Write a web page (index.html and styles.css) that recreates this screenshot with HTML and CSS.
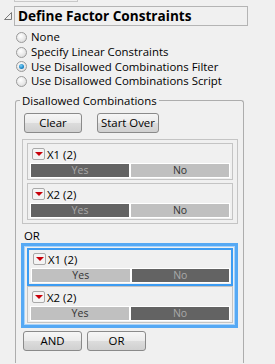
FILE: index.html
```html
<!DOCTYPE html>
<html>
<head>
<meta charset="utf-8">
<link rel="stylesheet" href="styles.css">
</head>
<body>
<div class="stub"></div>
<div class="title-row">
  <svg class="disclose" width="10" height="10" viewBox="0 0 10 10"><path d="M8.5 1.5 L8.5 8.5 L1.5 8.5 Z" fill="none" stroke="#7a7a7a" stroke-width="1"/></svg>
  <div class="title-box">Define Factor Constraints</div>
</div>
<ul class="radios">
  <li><span class="radio"></span>None</li>
  <li><span class="radio"></span>Specify Linear Constraints</li>
  <li><span class="radio on"></span>Use Disallowed Combinations Filter</li>
  <li><span class="radio"></span>Use Disallowed Combinations Script</li>
</ul>
<div class="group">
  <div class="legend">Disallowed Combinations</div>
  <div class="btns">
    <button class="btn w58">Clear</button>
    <button class="btn">Start Over</button>
  </div>
  <div class="panel">
    <div class="fbox">
      <div class="fhead"><span class="tri"></span>X1 (2)</div>
      <div class="bar"><span class="seg dark">Yes</span><span class="seg light">No</span></div>
    </div>
    <div class="fbox">
      <div class="fhead"><span class="tri"></span>X2 (2)</div>
      <div class="bar"><span class="seg dark">Yes</span><span class="seg light">No</span></div>
    </div>
  </div>
  <div class="or-label">OR</div>
  <div class="panel sel">
    <div class="fbox sel">
      <div class="fhead"><span class="tri"></span>X1 (2)</div>
      <div class="bar"><span class="seg light">Yes</span><span class="seg dark">No</span></div>
    </div>
    <div class="fbox">
      <div class="fhead"><span class="tri"></span>X2 (2)</div>
      <div class="bar"><span class="seg light">Yes</span><span class="seg dark">No</span></div>
    </div>
  </div>
  <div class="btns bottom">
    <button class="btn w59">AND</button>
    <button class="btn w59">OR</button>
  </div>
</div>
</body>
</html>
```
FILE: styles.css
```css
html, body {
  margin: 0;
  padding: 0;
  background: #f0f0f0;
  font-family: "Open Sans", "Noto Sans", sans-serif;
  font-size: 11.4px;
  color: #000;
  width: 275px;
  height: 364px;
  overflow: hidden;
}
.stub {
  margin-left: 14px;
  width: 62px;
  height: 1px;
  border: 1px solid #c8c8c8;
  border-top: none;
}
.title-row {
  display: flex;
  align-items: center;
  margin-top: 4px;
  height: 20px;
}
.disclose {
  margin-left: 3px;
  margin-right: 1px;
}
.title-box {
  width: 229px;
  height: 18px;
  border: 1px solid #b4b4b4;
  font-weight: bold;
  font-size: 13.6px;
  line-height: 18px;
  padding-left: 3px;
}
.radios {
  list-style: none;
  margin: 4px 0 0 0;
  padding: 0 0 0 16px;
}
.radios li {
  display: flex;
  align-items: center;
  height: 14.7px;
  line-height: 14px;
  white-space: nowrap;
}
.radio {
  width: 11px;
  height: 11px;
  border-radius: 50%;
  box-sizing: border-box;
  border: 1px solid #9a9a9a;
  background: radial-gradient(circle at 40% 35%, #ffffff 0%, #e6e6e6 60%, #cfcfcf 100%);
  margin-right: 4px;
  position: relative;
  flex: none;
}
.radio.on::after {
  content: "";
  position: absolute;
  left: 2px;
  top: 2px;
  width: 5px;
  height: 5px;
  border-radius: 50%;
  background: radial-gradient(circle at 40% 35%, #7fd0f5 0%, #1a86c8 60%, #0b5b93 100%);
}
.group {
  position: relative;
  margin: 11px 0 0 15px;
  width: 229px;
  height: 263px;
  border: 1px solid #adadad;
  border-bottom: none;
  border-radius: 3px 3px 0 0;
  padding: 12px 0 0 8px;
  box-sizing: border-box;
}
.legend {
  position: absolute;
  top: -8px;
  left: 4px;
  padding: 0 2px;
  background: #f0f0f0;
  line-height: 15px;
}
.btns {
  display: flex;
  gap: 15px;
  height: 20px;
}
.btns.bottom {
  gap: 5px;
  margin-top: 3px;
  margin-left: -1px;
}
.btn {
  font-family: inherit;
  font-size: 11.4px;
  height: 20px;
  padding: 0 3px;
  border: 1px solid #8a8a8a;
  border-radius: 3px;
  background: linear-gradient(#f6f6f6 0%, #ebebeb 50%, #dcdcdc 51%, #d0d0d0 100%);
  line-height: 17px;
  color: #000;
}
.w58 { width: 58px; }
.w59 { width: 59px; }
.panel {
  margin: 6px 0 0 -2px;
  width: 216px;
  border: 1px solid #c4c4c4;
  padding: 3px 4px;
  box-sizing: border-box;
  display: flex;
  flex-direction: column;
  gap: 3px;
}
.panel.sel {
  margin: 1px 0 0 -3px;
  width: 217px;
  border: 3px solid #56a9f4;
  box-shadow: 0 0 0 1px #a8d3fa inset;
  padding: 2px 2px 2px 3px;
  gap: 0;
}
.fbox {
  border: 1px solid #c4c4c4;
  padding: 4px 2px 1px 2px;
}
.fbox.sel {
  border: 2px solid #3d9cf2;
  padding: 3px 1px 1px 2px;
}
.fhead {
  display: flex;
  align-items: center;
  height: 13px;
  margin-left: 2px;
  margin-bottom: 2px;
  line-height: 13px;
  color: #000;
}
.tri {
  width: 13px;
  height: 12px;
  box-sizing: border-box;
  border: 1px solid #a9a9a9;
  border-radius: 2px;
  background: #f4f4f4;
  margin-right: 2px;
  position: relative;
  flex: none;
}
.tri::after {
  content: "";
  position: absolute;
  left: 2px;
  top: 3px;
  border-left: 4px solid transparent;
  border-right: 4px solid transparent;
  border-top: 4px solid #c8000a;
}
.bar {
  display: flex;
  height: 15px;
}
.seg {
  flex: 1;
  border: 1px solid #ffffff;
  text-align: center;
  font-size: 10.5px;
  line-height: 13px;
}
.seg.dark {
  background: #636363;
  color: #a9a9a9;
}
.seg.light {
  background: #c0c0c0;
  color: #333333;
}
.or-label {
  margin-top: 5px;
  height: 13px;
  line-height: 13px;
}
```
